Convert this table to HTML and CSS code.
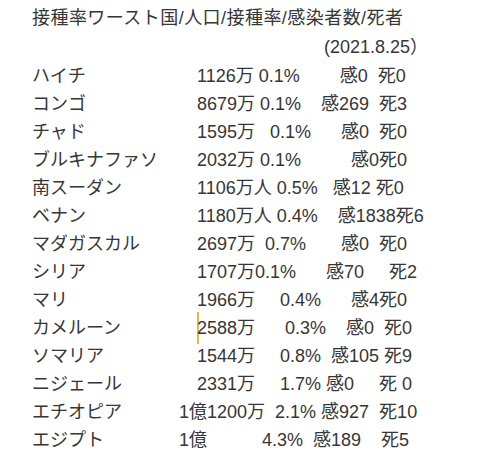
FILE: index.html
```html
<!DOCTYPE html>
<html lang="ja">
<head>
<meta charset="utf-8">
<title>接種率ワースト国</title>
<link rel="stylesheet" href="styles.css">
</head>
<body>
<main class="note">
  <div class="head title">接種率ワースト国/人口/接種率/感染者数/死者</div>
  <div class="head date">(2021.8.25）</div>
  <div class="row"><span class="name">ハイチ</span><span class="data">　1126万 0.1%        感0  死0</span></div>
  <div class="row"><span class="name">コンゴ</span><span class="data">　8679万 0.1%    感269  死3</span></div>
  <div class="row"><span class="name">チャド</span><span class="data">　1595万   0.1%      感0  死0</span></div>
  <div class="row"><span class="name">ブルキナファソ</span><span class="data">　2032万 0.1%          感0死0</span></div>
  <div class="row"><span class="name">南スーダン</span><span class="data">　1106万人 0.5%   感12 死0</span></div>
  <div class="row"><span class="name">ベナン</span><span class="data">　1180万人 0.4%    感1838死6</span></div>
  <div class="row"><span class="name">マダガスカル</span><span class="data">　2697万  0.7%       感0  死0</span></div>
  <div class="row"><span class="name">シリア</span><span class="data">　1707万0.1%      感70     死2</span></div>
  <div class="row"><span class="name">マリ</span><span class="data">　1966万     0.4%      感4死0</span></div>
  <div class="row"><span class="name">カメルーン</span><span class="data">　<span class="caret"></span>2588万      0.3%    感0  死0</span></div>
  <div class="row"><span class="name">ソマリア</span><span class="data">　1544万     0.8%  感105 死9</span></div>
  <div class="row"><span class="name">ニジェール</span><span class="data">　2331万     1.7% 感0     死 0</span></div>
  <div class="row"><span class="name">エチオピア</span><span class="data">1億1200万  2.1% 感927  死10</span></div>
  <div class="row"><span class="name">エジプト</span><span class="data">1億           4.3%  感189    死5</span></div>
</main>
</body>
</html>
```
FILE: styles.css
```css
html, body {
  margin: 0;
  padding: 0;
  background: #ffffff;
}

body {
  font-family: "Liberation Sans", "Noto Sans CJK JP", sans-serif;
  font-size: 18px;
  color: #363636;
}

.note {
  padding: 4px 0 0 32px;
}

.head {
  line-height: 29px;
  white-space: pre;
}

.title {
  letter-spacing: 0.45px;
}

.date {
  padding-left: 292px;
}

.row {
  display: grid;
  grid-template-columns: 147px 1fr;
  line-height: 28px;
  white-space: pre;
}

.caret {
  display: inline-block;
  width: 2px;
  height: 28px;
  margin-right: -2px;
  vertical-align: top;
  background: #e2b94a;
  box-shadow: 0 2px 0 #e2b94a, 0 -2px 0 #e2b94a;
}
```
